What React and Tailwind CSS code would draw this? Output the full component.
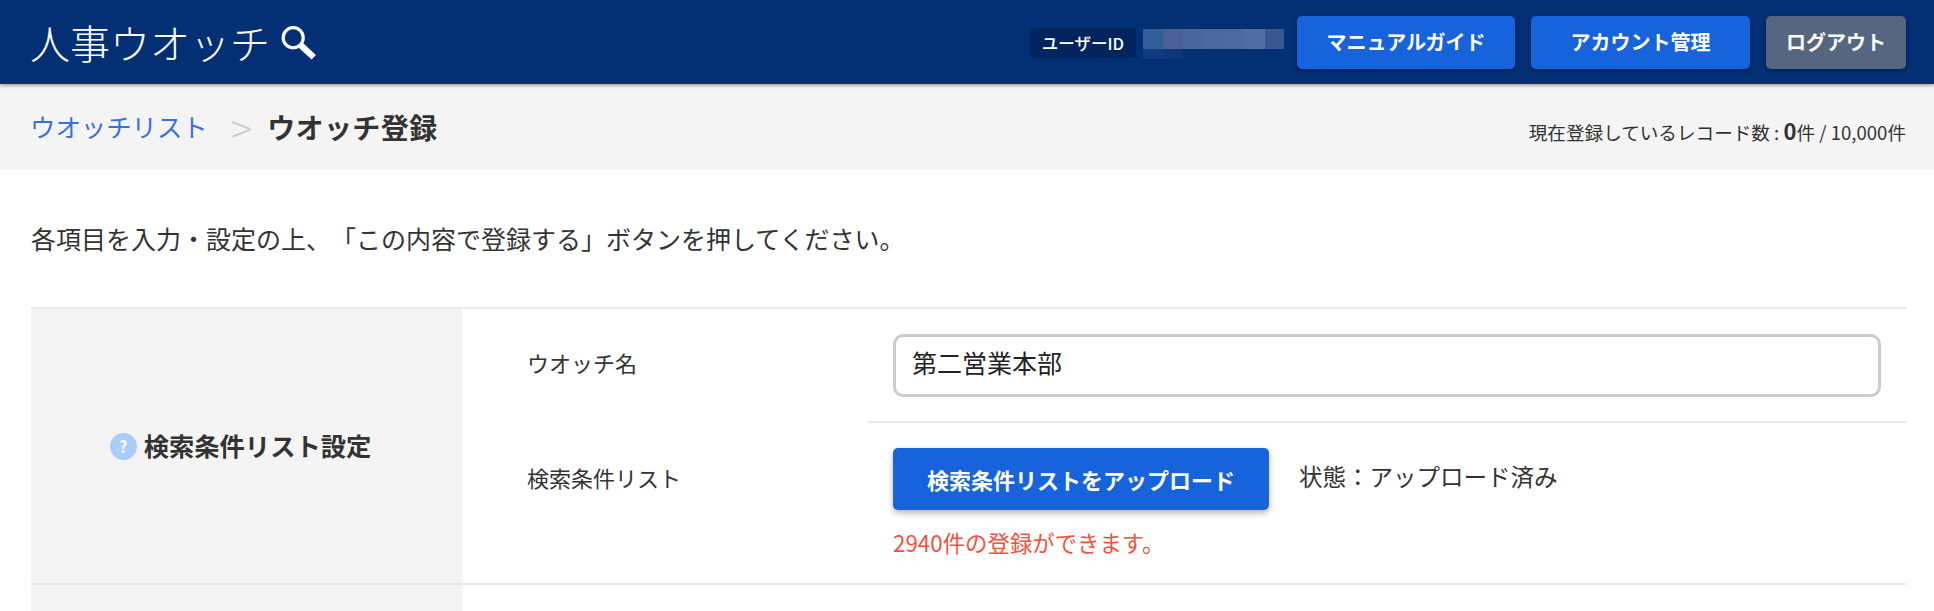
import React from 'react';

const pixels = [
  ['w-[20px]', 'bg-[#335d97]'],
  ['w-[20px]', 'bg-[#4c5f96]'],
  ['w-[20px]', 'bg-[#46689c]'],
  ['w-[20px]', 'bg-[#4a6a9e]'],
  ['w-[21px]', 'bg-[#4a6b9f]'],
  ['w-[21px]', 'bg-[#506ea1]'],
  ['w-[19px]', 'bg-[#375890]'],
];

function SearchMark() {
  return (
    <svg width="38" height="36" viewBox="0 0 36 34" fill="none" className="ml-[10px] mt-[1px] shrink-0">
      <circle cx="12.5" cy="12" r="9.5" stroke="white" strokeWidth="3" />
      <path d="M20 19.5 L32 30.5" stroke="white" strokeWidth="6" />
    </svg>
  );
}

function HeaderButton({ children, className }) {
  return (
    <button className={`h-[53px] rounded-[5px] text-white font-bold text-[20px] shadow-[0_2px_5px_rgba(0,0,0,0.3)] ${className}`}>
      {children}
    </button>
  );
}

export default function App() {
  return (
    <div className="h-[611px] overflow-hidden flex flex-col bg-white text-[#333333] [text-spacing-trim:space-all] font-['Noto_Sans_CJK_JP',sans-serif]">
      {/* header */}
      <header className="relative z-10 h-[84px] shrink-0 bg-[#032f75] flex items-center pl-[30px] pr-[28px] shadow-[0_1px_4px_rgba(0,0,0,0.45)]">
        <div className="flex items-center">
          <span className="text-white text-[40px] font-light leading-none">人事ウオッチ</span>
          <SearchMark />
        </div>
        <div className="ml-auto flex items-center">
          <span className="w-[106px] h-[30px] mt-[2px] flex items-center justify-center rounded-[4px] bg-[#02255e] text-white text-[16.5px] font-medium">ユーザーID</span>
          <div className="ml-[7px] mr-[12px] w-[142px] mt-[4px] h-[30px]">
            <div className="flex h-[20px]">
              {pixels.map(([w, bg], i) => (
                <div key={i} className={`${w} ${bg}`} />
              ))}
            </div>
            <div className="flex h-[10px]">
              <div className="w-[20px] bg-[#123a7e]" />
              <div className="w-[20px] bg-[#0e377b]" />
            </div>
          </div>
          <HeaderButton className="w-[218px] bg-[#1763dc]">マニュアルガイド</HeaderButton>
          <HeaderButton className="w-[219px] ml-[16px] bg-[#1763dc]">アカウント管理</HeaderButton>
          <HeaderButton className="w-[140px] ml-[16px] bg-[#566681]">ログアウト</HeaderButton>
        </div>
      </header>

      {/* breadcrumb */}
      <div className="h-[86px] shrink-0 bg-[#f4f4f4] flex items-center pl-[30px] pr-[28px]">
        <a className="text-[#3b6fdc] text-[25.4px] leading-none">ウオッチリスト</a>
        <span className="ml-[23px] text-[#cccccc] text-[40px] font-light leading-none">&gt;</span>
        <span className="ml-[15px] text-[28px] font-bold leading-none tracking-[0.4px]">ウオッチ登録</span>
        <span className="ml-auto mt-[6px] text-[18.6px] leading-none">
          現在登録しているレコード数 : <b className="text-[22px]">0</b>件 / 10,000件
        </span>
      </div>

      {/* body */}
      <main className="flex-1 flex flex-col pl-[31px] pr-[28px]">
        <p className="h-[137px] shrink-0 pt-[52px] text-[25px] leading-[32px]">
          各項目を入力・設定の上、「この内容で登録する」ボタンを押してください。
        </p>

        <section className="h-[278px] shrink-0 flex border-y-2 border-[#e9e9e9]">
          <div className="w-[431px] shrink-0 bg-[#f4f4f4] flex items-center justify-center">
            <div className="flex items-center mr-[12px]">
              <span className="w-[27px] h-[27px] rounded-full bg-[#a8cdfb] text-white text-[16px] font-bold flex items-center justify-center">?</span>
              <span className="ml-[7px] text-[25.3px] font-bold">検索条件リスト設定</span>
            </div>
          </div>
          <div className="flex-1 flex flex-col">
            <div className="h-[114px] shrink-0 flex">
              <div className="w-[406px] pl-[65px] pt-[37px] text-[22px] leading-[32px] shrink-0">ウオッチ名</div>
              <div className="flex-1 border-b-2 border-[#e9e9e9] pl-[25px] pr-[25px] pt-[25px]">
                <input
                  readOnly
                  value="第二営業本部"
                  className="w-full h-[63px] pl-[16px] pr-[16px] pb-[8px] border-[3px] border-[#cccccc] rounded-[10px] text-[25px] text-[#222222] outline-none bg-white"
                />
              </div>
            </div>
            <div className="flex-1 flex">
              <div className="w-[406px] pl-[65px] pt-[38px] text-[22px] leading-[32px] shrink-0">検索条件リスト</div>
              <div className="flex-1 pl-[25px] pt-[25px]">
                <div className="flex items-center">
                  <button className="w-[376px] h-[62px] rounded-[5px] bg-[#1763dc] text-white font-bold text-[22px] shadow-[0_3px_6px_rgba(0,0,0,0.3)]">検索条件リストをアップロード</button>
                  <span className="ml-[30px] mb-[4px] text-[23.5px]">状態：アップロード済み</span>
                </div>
                <p className="mt-[16px] text-[22.4px] leading-[32px] text-[#f5503c]">2940件の登録ができます。</p>
              </div>
            </div>
          </div>
        </section>

        <section className="flex-1 flex">
          <div className="w-[431px] bg-[#f4f4f4]" />
        </section>
      </main>
    </div>
  );
}
